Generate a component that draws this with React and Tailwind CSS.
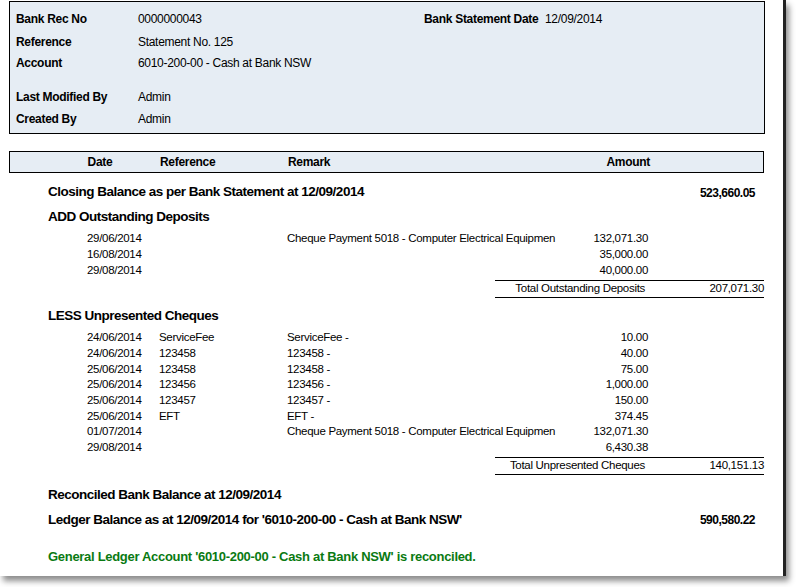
const F = { fontFamily: '"Liberation Sans", Arial, sans-serif' };

const deposits = [
  ['29/06/2014', '', 'Cheque Payment 5018 - Computer Electrical Equipmen', '132,071.30'],
  ['16/08/2014', '', '', '35,000.00'],
  ['29/08/2014', '', '', '40,000.00'],
];

const cheques = [
  ['24/06/2014', 'ServiceFee', 'ServiceFee -', '10.00'],
  ['24/06/2014', '123458', '123458 -', '40.00'],
  ['25/06/2014', '123458', '123458 -', '75.00'],
  ['25/06/2014', '123456', '123456 -', '1,000.00'],
  ['25/06/2014', '123457', '123457 -', '150.00'],
  ['25/06/2014', 'EFT', 'EFT -', '374.45'],
  ['01/07/2014', '', 'Cheque Payment 5018 - Computer Electrical Equipmen', '132,071.30'],
  ['29/08/2014', '', '', '6,430.38'],
];

function Row({ r }) {
  return (
    <div className="flex h-[15.7px] items-center text-[11.5px] tracking-[-0.3px]">
      <div className="w-[87px]" />
      <div className="w-[72px]">{r[0]}</div>
      <div className="w-[128px]">{r[1]}</div>
      <div className="w-[270px] whitespace-nowrap">{r[2]}</div>
      <div className="w-[91px] text-right">{r[3]}</div>
    </div>
  );
}

function Total({ label, value }) {
  return (
    <div className="ml-[495px] w-[269px] border-y border-black h-[18px] flex items-center text-[11.5px] tracking-[-0.3px]">
      <div className="w-[150px] text-right">{label}</div>
      <div className="flex-1 text-right">{value}</div>
    </div>
  );
}

function Heading({ children, value, h = 'h-[25px]' }) {
  return (
    <div className={`flex ${h} items-center font-bold text-[13.5px] tracking-[-0.5px]`}>
      <div className="pl-[48px] flex-1">{children}</div>
      {value && <div className="w-[120px] text-right pr-[28px] text-[12px]">{value}</div>}
    </div>
  );
}

export default function App() {
  return (
    <div style={F} className="w-[805px] h-[587px] bg-white relative overflow-hidden text-black">
      <div className="w-[786px] h-[576px] bg-white border-r-[3px] border-[#222] shadow-[3px_5px_6px_rgba(0,0,0,0.45)] pt-[1px]">
        <div className="ml-[9px] w-[756px] h-[133px] bg-[#e6edf4] border border-black text-[12px] tracking-[-0.3px] relative">
          <div className="flex h-[22px] mt-[6px] items-center">
            <div className="w-[128px] pl-[6px] font-bold">Bank Rec No</div>
            <div className="w-[286px]">0000000043</div>
            <div className="w-[121px] font-bold">Bank Statement Date</div>
            <div>12/09/2014</div>
          </div>
          <div className="flex h-[23px] items-center">
            <div className="w-[128px] pl-[6px] font-bold">Reference</div>
            <div>Statement No. 125</div>
          </div>
          <div className="flex h-[20px] items-center">
            <div className="w-[128px] pl-[6px] font-bold">Account</div>
            <div>6010-200-00 - Cash at Bank NSW</div>
          </div>
          <div className="flex h-[22px] mt-[13px] items-center">
            <div className="w-[128px] pl-[6px] font-bold">Last Modified By</div>
            <div>Admin</div>
          </div>
          <div className="flex h-[22px] items-center">
            <div className="w-[128px] pl-[6px] font-bold">Created By</div>
            <div>Admin</div>
          </div>
        </div>

        <div className="ml-[9px] mt-[17px] w-[755px] h-[22px] bg-[#e6edf4] border border-black flex items-center font-bold text-[12px] tracking-[-0.3px]">
          <div className="w-[150px] text-center pl-[30px]">Date</div>
          <div className="w-[128px]">Reference</div>
          <div className="w-[270px]">Remark</div>
          <div className="w-[92px] text-right">Amount</div>
        </div>

        <div className="mt-[7px]">
          <Heading value="523,660.05">Closing Balance as per Bank Statement at 12/09/2014</Heading>
          <Heading>ADD Outstanding Deposits</Heading>
          <div className="mt-[1px]">{deposits.map((r, i) => <Row key={i} r={r} />)}</div>
          <div className="mt-[2px]"><Total label="Total Outstanding Deposits" value="207,071.30" /></div>
          <div className="mt-[6px]"><Heading>LESS Unpresented Cheques</Heading></div>
          <div className="mt-[1px]">{cheques.map((r, i) => <Row key={i} r={r} />)}</div>
          <div className="mt-[1px]"><Total label="Total Unpresented Cheques" value="140,151.13" /></div>
          <div className="mt-[8px]"><Heading>Reconciled Bank Balance at 12/09/2014</Heading></div>
          <Heading value="590,580.22">Ledger Balance as at 12/09/2014 for '6010-200-00 - Cash at Bank NSW'</Heading>
          <div className="mt-[14px] pl-[48px] font-bold text-[13px] tracking-[-0.3px] text-[#0a7a12]">
            General Ledger Account '6010-200-00 - Cash at Bank NSW' is reconciled.
          </div>
        </div>
      </div>
    </div>
  );
}
